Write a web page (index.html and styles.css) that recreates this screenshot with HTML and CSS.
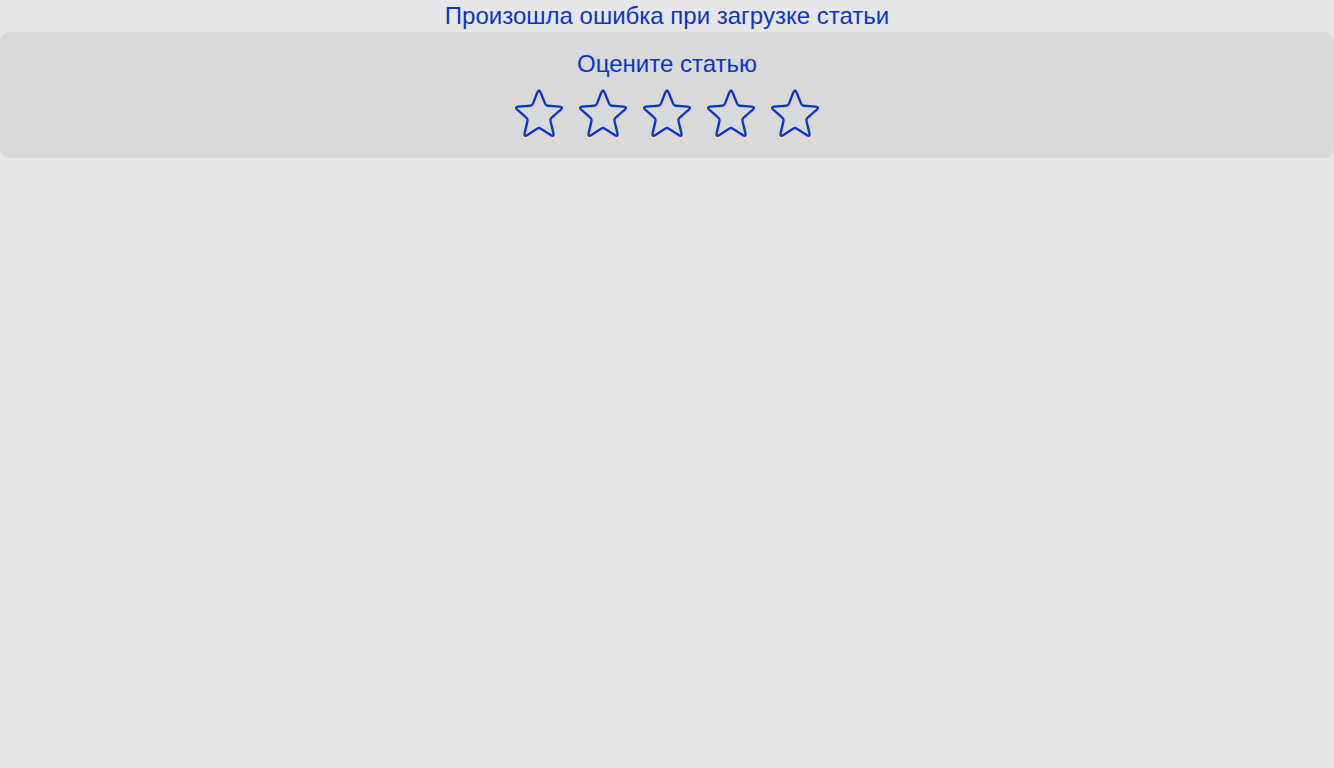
FILE: index.html
```html
<!DOCTYPE html>
<html lang="ru">
<head>
<meta charset="utf-8">
<title>Ошибка</title>
<link rel="stylesheet" href="styles.css">
</head>
<body>
<div class="page">
  <div class="error">Произошла ошибка при загрузке статьи</div>
  <section class="rating">
    <div class="rating-title">Оцените статью</div>
    <div class="stars">
      <svg class="star" viewBox="0 0 24 24"><path transform="translate(12 12) scale(1.06 1.1) translate(-12 -11.92)" d="M11.22 2.58 Q12 0.7 12.78 2.58 L14.91 7.77 Q15.23 8.55 16.08 8.62 L21.67 9.04 Q23.70 9.20 22.15 10.52 L17.88 14.15 Q17.23 14.70 17.43 15.53 L18.75 20.97 Q19.23 22.95 17.50 21.88 L12.72 18.95 Q12 18.5 11.28 18.95 L6.50 21.88 Q4.77 22.95 5.25 20.97 L6.57 15.53 Q6.77 14.70 6.12 14.15 L1.85 10.52 Q0.30 9.20 2.33 9.04 L7.92 8.62 Q8.77 8.55 9.09 7.77 Z"/></svg>
      <svg class="star" viewBox="0 0 24 24"><path transform="translate(12 12) scale(1.06 1.1) translate(-12 -11.92)" d="M11.22 2.58 Q12 0.7 12.78 2.58 L14.91 7.77 Q15.23 8.55 16.08 8.62 L21.67 9.04 Q23.70 9.20 22.15 10.52 L17.88 14.15 Q17.23 14.70 17.43 15.53 L18.75 20.97 Q19.23 22.95 17.50 21.88 L12.72 18.95 Q12 18.5 11.28 18.95 L6.50 21.88 Q4.77 22.95 5.25 20.97 L6.57 15.53 Q6.77 14.70 6.12 14.15 L1.85 10.52 Q0.30 9.20 2.33 9.04 L7.92 8.62 Q8.77 8.55 9.09 7.77 Z"/></svg>
      <svg class="star" viewBox="0 0 24 24"><path transform="translate(12 12) scale(1.06 1.1) translate(-12 -11.92)" d="M11.22 2.58 Q12 0.7 12.78 2.58 L14.91 7.77 Q15.23 8.55 16.08 8.62 L21.67 9.04 Q23.70 9.20 22.15 10.52 L17.88 14.15 Q17.23 14.70 17.43 15.53 L18.75 20.97 Q19.23 22.95 17.50 21.88 L12.72 18.95 Q12 18.5 11.28 18.95 L6.50 21.88 Q4.77 22.95 5.25 20.97 L6.57 15.53 Q6.77 14.70 6.12 14.15 L1.85 10.52 Q0.30 9.20 2.33 9.04 L7.92 8.62 Q8.77 8.55 9.09 7.77 Z"/></svg>
      <svg class="star" viewBox="0 0 24 24"><path transform="translate(12 12) scale(1.06 1.1) translate(-12 -11.92)" d="M11.22 2.58 Q12 0.7 12.78 2.58 L14.91 7.77 Q15.23 8.55 16.08 8.62 L21.67 9.04 Q23.70 9.20 22.15 10.52 L17.88 14.15 Q17.23 14.70 17.43 15.53 L18.75 20.97 Q19.23 22.95 17.50 21.88 L12.72 18.95 Q12 18.5 11.28 18.95 L6.50 21.88 Q4.77 22.95 5.25 20.97 L6.57 15.53 Q6.77 14.70 6.12 14.15 L1.85 10.52 Q0.30 9.20 2.33 9.04 L7.92 8.62 Q8.77 8.55 9.09 7.77 Z"/></svg>
      <svg class="star" viewBox="0 0 24 24"><path transform="translate(12 12) scale(1.06 1.1) translate(-12 -11.92)" d="M11.22 2.58 Q12 0.7 12.78 2.58 L14.91 7.77 Q15.23 8.55 16.08 8.62 L21.67 9.04 Q23.70 9.20 22.15 10.52 L17.88 14.15 Q17.23 14.70 17.43 15.53 L18.75 20.97 Q19.23 22.95 17.50 21.88 L12.72 18.95 Q12 18.5 11.28 18.95 L6.50 21.88 Q4.77 22.95 5.25 20.97 L6.57 15.53 Q6.77 14.70 6.12 14.15 L1.85 10.52 Q0.30 9.20 2.33 9.04 L7.92 8.62 Q8.77 8.55 9.09 7.77 Z"/></svg>
    </div>
  </section>
</div>
</body>
</html>
```

FILE: styles.css
```css
html, body {
  margin: 0;
  padding: 0;
  background: #e7e7e9;
}

.page {
  font-family: "Liberation Sans", Arial, sans-serif;
  color: #0a35c8;
  display: flex;
  flex-direction: column;
}

.error {
  height: 32px;
  line-height: 32px;
  font-size: 24px;
  text-align: center;
}

.rating {
  background: #d9d9d9;
  border-radius: 10px;
  height: 126px;
  box-sizing: border-box;
  padding-top: 18px;
  display: flex;
  flex-direction: column;
  align-items: center;
}

.rating-title {
  font-size: 24px;
  line-height: 28px;
  height: 28px;
}

.stars {
  margin-top: 11px;
  display: flex;
  gap: 16px;
}

.star {
  width: 48px;
  height: 48px;
  display: block;
}

.star path {
  fill: none;
  stroke: #0a35c8;
  stroke-width: 1.1;
  stroke-linejoin: round;
}
```
